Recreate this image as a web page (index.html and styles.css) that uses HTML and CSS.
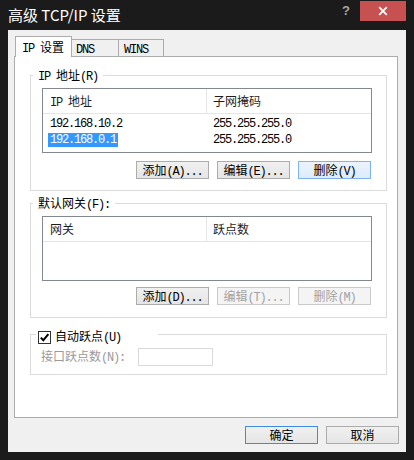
FILE: index.html
```html
<!DOCTYPE html>
<html>
<head>
<meta charset="utf-8">
<link rel="stylesheet" href="styles.css">
</head>
<body>
<div class="win">
  <div class="titlebar">
    <div class="title">高级 TCP/IP 设置</div>
    <div class="help">?</div>
    <div class="close"><svg width="10" height="10" viewBox="0 0 10 10"><path d="M1.2 1.2L8.8 8.8M8.8 1.2L1.2 8.8" stroke="#fff" stroke-width="1.8"/></svg></div>
  </div>
  <div class="client">
    <div class="tabs">
      <div class="tab active"><span class="a">IP </span>设置</div>
      <div class="tab tab-dns"><span class="a">DNS</span></div>
      <div class="tab tab-wins"><span class="a">WINS</span></div>
    </div>
    <div class="panel">
      <fieldset class="group g-ip">
        <legend><span class="a">IP </span>地址<span class="a">(R)</span></legend>
        <div class="list">
          <div class="lrow lhead">
            <div class="cell c1"><span class="a">IP </span>地址</div>
            <div class="cell c2">子网掩码</div>
          </div>
          <div class="lrow item">
            <div class="cell c1"><span class="txt a">192.168.10.2</span></div>
            <div class="cell c2"><span class="txt a">255.255.255.0</span></div>
          </div>
          <div class="lrow item">
            <div class="cell c1"><span class="txt a sel">192.168.0.1</span></div>
            <div class="cell c2"><span class="txt a">255.255.255.0</span></div>
          </div>
        </div>
        <div class="btns">
          <button class="btn">添加<span class="a">(A)...</span></button>
          <button class="btn">编辑<span class="a">(E)...</span></button>
          <button class="btn focus">删除<span class="a">(V)</span></button>
        </div>
      </fieldset>

      <fieldset class="group g-gw">
        <legend>默认网关<span class="a">(F):</span></legend>
        <div class="list">
          <div class="lrow lhead">
            <div class="cell c1">网关</div>
            <div class="cell c2">跃点数</div>
          </div>
        </div>
        <div class="btns">
          <button class="btn">添加<span class="a">(D)...</span></button>
          <button class="btn" disabled>编辑<span class="a">(T)...</span></button>
          <button class="btn" disabled>删除<span class="a">(M)</span></button>
        </div>
      </fieldset>

      <fieldset class="group g-metric">
        <legend><span class="chkline"><span class="chk"><svg width="11" height="11" viewBox="0 0 11 11"><path d="M1.8 5.6L4.3 8.2L9.4 2.2" fill="none" stroke="#000" stroke-width="2"/></svg></span><span>自动跃点<span class="a">(U)</span></span></span></legend>
        <div class="metric">
          <span class="mlabel">接口跃点数<span class="a">(N):</span></span>
          <span class="field"></span>
        </div>
      </fieldset>
    </div>
    <div class="footer">
      <button class="btn focus2">确定</button>
      <button class="btn">取消</button>
    </div>
  </div>
</div>
</body>
</html>
```

FILE: styles.css
```css
* { box-sizing: border-box; }
html, body { margin: 0; padding: 0; }
body {
  background: #1b1b1b;
  font-family: "Noto Sans CJK SC", "Noto Sans", sans-serif;
  font-size: 12px;
  color: #000;
}
.a {
  font-family: "Liberation Mono", monospace;
  font-size: 12px;
  letter-spacing: -1.2px;
}
.win {
  width: 414px;
  height: 460px;
  background: #1b1b1b;
  overflow: hidden;
}
.titlebar {
  height: 30px;
  display: flex;
  align-items: flex-start;
}
.title {
  flex: 1;
  color: #fff;
  font-size: 15px;
  line-height: 29px;
  padding-left: 8px;
}
.help {
  width: 16px;
  margin-right: 6px;
  text-align: center;
  color: #a8a8a8;
  font: bold 13px/22px "Liberation Sans", sans-serif;
}
.close {
  width: 46px;
  height: 20px;
  margin-top: 1px;
  margin-right: 8px;
  background: #c75050;
  display: flex;
  align-items: center;
  justify-content: center;
}
.client {
  margin: 0 8px;
  height: 422px;
  background: #f0f0f0;
  padding: 6px 8px 0 6px;
}
.tabs {
  display: flex;
  align-items: flex-end;
  height: 20px;
  padding-left: 1px;
  position: relative;
  z-index: 1;
}
.tab {
  height: 17px;
  border: 1px solid #acacac;
  border-left: none;
  border-bottom: none;
  background: #f0f0f0;
  line-height: 16px;
  white-space: nowrap;
}
.tab.active {
  width: 57px;
  height: 21px;
  margin-bottom: -1px;
  border-left: 1px solid #acacac;
  background: #fff;
  padding-left: 6px;
  line-height: 19px;
}
.tab-dns { width: 47px; padding-left: 4px; }
.tab-wins { width: 45px; padding-left: 5px; }

.panel {
  height: 362px;
  border: 1px solid #acacac;
  background: #fff;
  padding-top: 10px;
}
.group {
  margin: 0 10px 0 15px;
  padding: 0;
  border: 1px solid #dcdcdc;
  min-width: 0;
}
.group legend {
  margin-left: 2px;
  padding: 0 5px;
  line-height: 16px;
  height: 16px;
}
.g-gw { margin-top: 4px; }
.g-metric { margin-top: 5px; }

.list {
  margin: 5px 14px 0 11px;
  height: 65px;
  border: 1px solid #828790;
  background: #fff;
}
.lrow { display: flex; }
.lhead {
  height: 25px;
  border-bottom: 1px solid #e5e5e5;
  color: #1e1e1e;
}
.lhead .cell { line-height: 24px; }
.cell.c1 { width: 164px; padding-left: 5px; }
.cell.c2 { flex: 1; padding-left: 4px; }
.lhead .c1 { border-right: 1px solid #e5e5e5; padding-left: 7px; }
.lhead .c2 { padding-left: 6px; margin-right: 2px; }
.item { height: 16px; }
.item .cell { line-height: 16px; }
.txt {
  display: inline-block;
  padding: 0 2px;
  height: 14px;
  line-height: 14px;
  margin-top: 1px;
}
.txt.sel {
  background: #3399ff;
  color: #fff;
  margin-top: 2px;
}

.btns {
  display: flex;
  justify-content: flex-end;
  gap: 8px;
  margin: 8px 15px 0 0;
  padding-bottom: 11px;
}
.g-gw .btns { margin-top: 6px; padding-bottom: 12px; }
.btn {
  width: 73px;
  height: 18px;
  padding: 0;
  margin: 0;
  border: 1px solid #acacac;
  background: linear-gradient(#f0f0f0, #e5e5e5);
  font-family: "Noto Sans CJK SC", "Noto Sans", sans-serif;
  font-size: 12px;
  line-height: 16px;
  color: #000;
  white-space: nowrap;
}
.btn.focus {
  border-color: #7eb4ea;
  background: linear-gradient(#ecf4fc, #dcecfc);
}
.btn.focus2 {
  border-color: #3c8ce0;
  background: linear-gradient(#f0f0f0, #e5e5e5);
}
.btn:disabled {
  border-color: #cacaca;
  background: #f4f4f4;
  color: #a3a3a3;
}

.g-metric legend {
  margin-left: 5px;
  padding: 6px 0 0 2px;
  width: 122px;
  height: 22px;
}
.chkline {
  display: flex;
  align-items: center;
  gap: 4px;
  height: 16px;
  line-height: 16px;
}
.chk {
  width: 13px;
  height: 13px;
  border: 1px solid #333;
  background: #fff;
  display: flex;
  align-items: center;
  justify-content: center;
}
.metric {
  display: flex;
  align-items: center;
  margin-top: 3px;
  padding: 0 0 8px 10px;
}
.mlabel {
  width: 97px;
  color: #9a9a9a;
  line-height: 16px;
}
.field {
  width: 75px;
  height: 18px;
  border: 1px solid #d9d9d9;
  background: #fff;
}
.footer {
  display: flex;
  justify-content: flex-end;
  gap: 8px;
  margin: 8px -1px 0 0;
}
```
